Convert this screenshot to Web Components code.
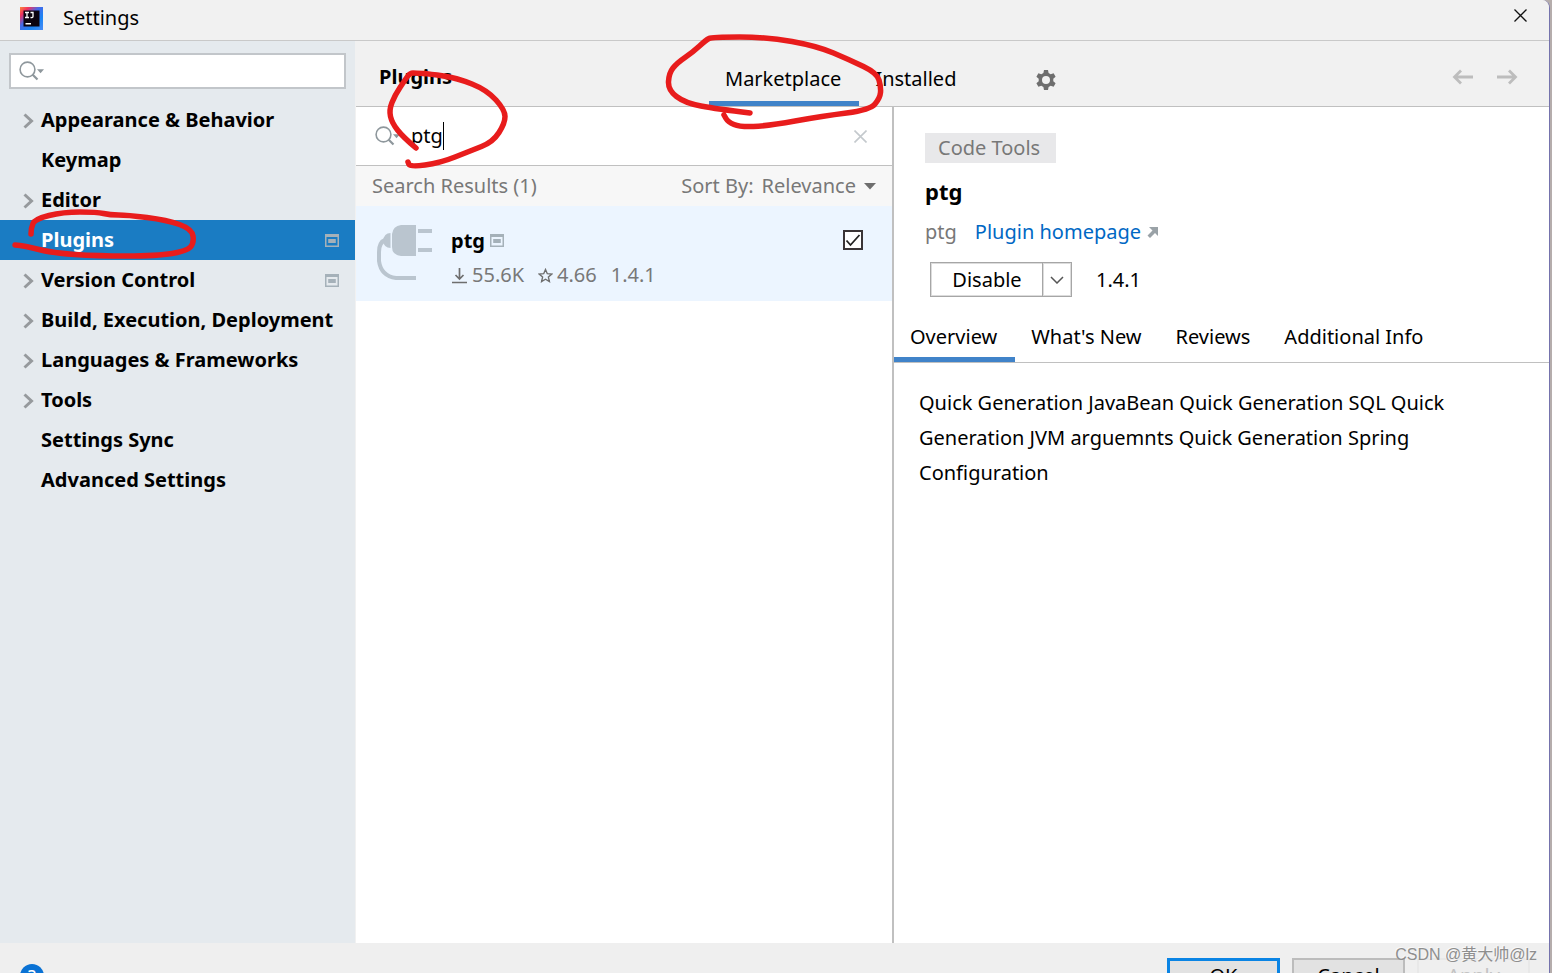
<!DOCTYPE html>
<html lang="en">
<head>
<meta charset="utf-8">
<title>Settings</title>
<style>
  body { margin: 0; font: 20px/28px "Noto Sans", "Open Sans", sans-serif; color: #000; background: #b5adac; }
</style>
</head>
<body>
<settings-window>
  <title-bar slot="title">Settings</title-bar>
  <settings-nav slot="nav">
    <nav-item expandable>Appearance &amp; Behavior</nav-item>
    <nav-item>Keymap</nav-item>
    <nav-item expandable>Editor</nav-item>
    <nav-item selected project>Plugins</nav-item>
    <nav-item expandable project>Version Control</nav-item>
    <nav-item expandable>Build, Execution, Deployment</nav-item>
    <nav-item expandable>Languages &amp; Frameworks</nav-item>
    <nav-item expandable>Tools</nav-item>
    <nav-item>Settings Sync</nav-item>
    <nav-item>Advanced Settings</nav-item>
  </settings-nav>
  <plugins-header slot="header">
    <span slot="heading">Plugins</span>
    <tab-item selected>Marketplace</tab-item>
    <tab-item>Installed</tab-item>
  </plugins-header>
  <plugin-list slot="list">
    <plugin-row>ptg</plugin-row>
  </plugin-list>
  <plugin-details slot="details">
    <span slot="tag">Code Tools</span>
    <span slot="name">ptg</span>
    <span slot="vendor">ptg</span>
    <tab-item slot="tabs" selected>Overview</tab-item>
    <tab-item slot="tabs">What's New</tab-item>
    <tab-item slot="tabs">Reviews</tab-item>
    <tab-item slot="tabs">Additional Info</tab-item>
    Quick Generation JavaBean Quick Generation SQL Quick Generation JVM arguemnts Quick Generation Spring Configuration
  </plugin-details>
  <dialog-footer slot="footer"></dialog-footer>
</settings-window>
<red-marks></red-marks>
<water-mark>CSDN @黄大帅@lz</water-mark>

<script>
const BASE = `:host,*{box-sizing:border-box} button,input,select{font:inherit;color:inherit;margin:0;padding:0;border:0;background:none;outline:0;border-radius:0} svg{display:block;flex:none}`;
const SEARCH = `<svg width="26" height="20" viewBox="0 0 26 20" fill="none" stroke="#8e979c"><circle cx="8.5" cy="8.5" r="7.4" stroke-width="1.6"/><path d="M13.5 13.5l5 5" stroke-width="2.2"/><path d="M18 8.2h7l-3.5 4z" fill="#8e979c" stroke="none"/></svg>`;
const PROJECT = `<svg width="14" height="13" viewBox="0 0 14 13" fill="#a5b1b9"><path fill-rule="evenodd" d="M0 0h14v13H0zM1.500 3v8.500h11V3z"/><path d="M3.200 5h7.600v4H3.200z"/></svg>`;

function define(name, css, html) {
  const tpl = document.createElement('template');
  tpl.innerHTML = `<style>${BASE}${css}</style>${html}`;
  customElements.define(name, class extends HTMLElement {
    constructor() {
      super();
      this.attachShadow({ mode: 'open' }).append(tpl.content.cloneNode(true));
    }
  });
}

define('settings-window', `
  :host{display:grid;grid-template-rows:auto 1fr 30px;height:100vh;margin-right:2px;border-right:1px solid #7573ad;border-top-right-radius:8px;background:#f1f1f1;overflow:hidden}
  .main{display:grid;grid-template-columns:355px minmax(0,1fr);min-height:0}
  .page{display:grid;grid-template-rows:auto 1fr;border-left:1px solid #f1f1f1}
  .split{display:grid;grid-template-columns:538fr 655fr;background:#fff}
  ::slotted([slot=list]){border-right:2px solid #c0c0c0}`,
  `<slot name="title"></slot>
   <div class="main"><slot name="nav"></slot>
     <div class="page"><slot name="header"></slot><div class="split"><slot name="list"></slot><slot name="details"></slot></div></div>
   </div><slot name="footer"></slot>`);

define('title-bar', `
  :host{display:flex;align-items:center;height:41px;padding:0 22px 4px 20px;border-bottom:1px solid #c9c9c9;background:#f1f1f1}
  .t{flex:1;margin-left:20px}
  button{display:flex;padding-bottom:6px}`,
  `<svg width="23" height="23" viewBox="0 0 23 23"><defs><linearGradient id="g" x1="0" y1="0" x2="1" y2="1"><stop offset="0" stop-color="#fc8a3a"/><stop offset=".2" stop-color="#f0315f"/><stop offset=".42" stop-color="#4768e8"/><stop offset=".7" stop-color="#1a84f4"/><stop offset="1" stop-color="#4a8cf5"/></linearGradient></defs><path fill="url(#g)" d="M0 0h23v23H0z"/><path d="M3.500 3.500h16v16h-16z" fill="#0b0310"/><path d="M5 5.500h4M7 5.500v5M5 10.500h4M10.500 5.500H13v4q0 1.300-2.500 1" fill="none" stroke="#fff" stroke-width="1.300"/><path d="M5.500 16h5.500v1.500H5.500z" fill="#fff"/></svg>
   <span class="t"><slot></slot></span>
   <button aria-label="Close"><svg width="13" height="13" viewBox="0 0 13 13" stroke="#111" stroke-width="1.300"><path d="M.5.500l12 12M12.500.500l-12 12"/></svg></button>`);

define('settings-nav', `
  :host{display:block;background:#e5eaee;padding-top:12px}
  label{display:flex;align-items:center;height:36px;margin:0 9px 11px;padding:0 8px;border:2px solid #c2c6ca;background:#fff}
  input{flex:1;min-width:0}`,
  `<label>${SEARCH}<input type="text" aria-label="Search settings"></label><nav><slot></slot></nav>`);

define('nav-item', `
  :host{display:flex;align-items:center;height:40px;padding:0 16px 0 23px;font-weight:700}
  .c{width:18px;flex:none;padding-top:2px;visibility:hidden}
  :host([expandable]) .c{visibility:visible}
  a{flex:1;color:inherit;text-decoration:none;white-space:nowrap}
  .p{display:none}
  :host([project]) .p{display:block}
  :host([selected]){background:#1a7cc3;color:#fff}`,
  `<span class="c"><svg width="11" height="16" viewBox="0 0 11 16" fill="none" stroke="#969a9d" stroke-width="3"><path d="M1.500 1.500L8.500 8l-7 6.500"/></svg></span><a href="#"><slot></slot></a><span class="p">${PROJECT}</span>`);

define('tab-item', `
  :host{display:flex;align-self:stretch}
  button{padding:4px 18px 0 16px;height:100%;border-top:5px solid transparent;border-bottom:5px solid transparent;white-space:nowrap}
  :host([selected]) button{border-bottom-color:#4083c9}`,
  `<button><slot></slot></button>`);

define('plugins-header', `
  :host{display:grid;grid-template-columns:353px auto 1fr;align-items:center;height:66px;padding-top:6px;border-bottom:1px solid #c0c0c0;background:#f1f1f1}
  b{padding:0 0 0 23px}
  .tabs{display:flex;height:100%;align-items:center}
  .tools{display:flex;justify-content:space-between;align-items:center;padding:6px 31px 0 62px}
  button{display:flex}
  .nav{display:flex;gap:22px;padding-bottom:6px}`,
  `<b><slot name="heading"></slot></b><div class="tabs"><slot></slot></div>
   <div class="tools"><button aria-label="Plugin settings"><svg width="20" height="20" viewBox="-10 -10 20 20" fill="#6e6e6e"><path fill-rule="evenodd" d="M-2-10h4l.6 3 2.100 1.200 2.900-1 2 3.500-2.300 2v2.600l2.300 2-2 3.500-2.900-1L2.600 7 2 10h-4l-.6-3-2.100-1.200-2.900 1-2-3.500 2.300-2v-2.600l-2.300-2 2-3.500 2.900 1L-2.600-7zM0-4a4 4 0 1 0 0 8 4 4 0 1 0 0-8z"/></svg></button>
   <span class="nav"><button aria-label="Back"><svg width="22" height="16" viewBox="0 0 22 16" fill="none" stroke="#bdbdbd" stroke-width="2.800"><path d="M21 8H3M9 1.500L2.500 8 9 14.500"/></svg></button><button aria-label="Forward"><svg width="22" height="16" viewBox="0 0 22 16" fill="none" stroke="#bdbdbd" stroke-width="2.800"><path d="M1 8h18M13 1.500L19.500 8 13 14.500"/></svg></button></span></div>`);

define('plugin-list', `
  :host{display:block}
  .search{display:flex;align-items:center;height:59px;padding:0 25px 0 19px;border-bottom:1px solid #c0c0c0}
  .search label{display:flex;align-items:center;flex:1}
  input{field-sizing:content;margin-left:10px;height:28px}
  i{width:1px;height:28px;background:#000}
  button{display:flex}
  .bar{display:flex;justify-content:space-between;align-items:center;height:40px;padding:0 16px;background:#f7f7f7;color:#787878}
  .sort{display:flex;align-items:center;gap:8px}
  select{appearance:none;field-sizing:content;height:28px}`,
  `<div class="search"><label>${SEARCH}<input type="text" value="ptg" aria-label="Search plugins"><i></i></label><button aria-label="Clear"><svg width="13" height="13" viewBox="0 0 13 13" stroke="#c4c9cd" stroke-width="1.600"><path d="M.5.500l12 12M12.500.500l-12 12"/></svg></button></div>
   <div class="bar"><span>Search Results (1)</span><span class="sort"><label for="s">Sort By:</label><select id="s"><option>Relevance</option></select><svg width="12" height="7" viewBox="0 0 12 7" fill="#6e6e6e"><path d="M0 0h12L6 6.500z"/></svg></span></div>
   <slot></slot>`);

define('plugin-row', `
  :host{display:flex;height:95px;padding:18px 29px 0 21px;background:#ecf5ff}
  .info{flex:1;margin-left:19px}
  .name{display:flex;align-items:center;gap:5px;font-weight:700;height:33px}
  .meta{display:flex;align-items:center;color:#787878;height:36px}
  .meta svg{margin-right:4px}
  .meta span{margin-right:14px}
  input{appearance:none;width:20px;height:20px;margin-top:6px;border:2px solid #3a3436;background:#fff url("data:image/svg+xml,%3Csvg xmlns='http://www.w3.org/2000/svg' viewBox='0 0 16 16'%3E%3Cpath d='M1.500 8.500l4 4.500L14.500 3' fill='none' stroke='%23222' stroke-width='1.800'/%3E%3C/svg%3E") center/16px no-repeat}`,
  `<svg width="55" height="56" viewBox="0 0 55 56" fill="#bac5cf"><path d="M24 1h15v31H24q-9-1-9-9V10q1-8 9-9zM41 5h14v4H41zM41 24h14v4H41zM13.500 9v15Q7 24 6 17q1-8 7.500-8z"/><path d="M9 15.500Q2 18 2 28v9q2 15 17 17h20" fill="none" stroke="#bac5cf" stroke-width="4"/></svg>
   <div class="info"><div class="name"><slot></slot>${PROJECT}</div>
   <div class="meta"><svg width="17" height="17" viewBox="0 0 17 17" fill="none" stroke="#6e6e6e" stroke-width="1.700"><path d="M1 15.500h15M8.500 1v11M4.500 8l4 4 4-4"/></svg><span>55.6K</span><svg width="15" height="15" viewBox="0 0 15 15" fill="none" stroke="#6e6e6e" stroke-width="1.400"><path d="M7.500 1.500l1.800 4.200 4.500.4-3.400 3 1 4.400-3.900-2.300-3.900 2.300 1-4.400-3.400-3 4.500-.4z"/></svg><span>4.66</span><span>1.4.1</span></div></div>
   <input type="checkbox" checked aria-label="Enable ptg">`);

define('plugin-details', `
  :host{display:block;padding-top:26px}
  .tag{display:inline-flex;align-items:center;height:30px;margin-left:31px;padding:0 16px 0 13px;background:#e8e8ea;color:#787878}
  h1{margin:8px 0 0 31px;font:inherit;font-weight:700;font-size:22px;line-height:40px}
  .by{display:flex;align-items:center;gap:18px;height:42px;margin-left:31px;color:#787878}
  a{display:flex;align-items:center;gap:6px;color:#0068c4;text-decoration:none}
  .act{display:flex;align-items:center;height:35px;margin:9px 0 0 36px}
  .act button{height:35px;border:1px solid #a6a6a6;box-shadow:inset 0 0 0 1px #dcdcdc;display:flex;align-items:center;justify-content:center}
  .d{width:114px}
  .act .m{width:30px;margin-left:-2px}
  .act span{margin-left:24px}
  .tabs{display:flex;height:66px;border-bottom:1px solid #c0c0c0;padding-top:10px}
  p{margin:22px 90px 0 25px;line-height:35px}`,
  `<div class="tag"><slot name="tag"></slot></div><h1><slot name="name"></slot></h1>
   <div class="by"><slot name="vendor"></slot><a href="#">Plugin homepage<svg width="11" height="11" viewBox="0 0 11 11"><path d="M2 0h9v9L8 6l-5 5-2.500-2.500 5-5z" fill="#9aa2a7"/></svg></a></div>
   <div class="act"><button class="d">Disable</button><button class="m" aria-label="More actions"><svg width="14" height="8" viewBox="0 0 14 8" fill="none" stroke="#555" stroke-width="1.500"><path d="M1 1l6 6 6-6"/></svg></button><span>1.4.1</span></div>
   <div class="tabs"><slot name="tabs"></slot></div><p><slot></slot></p>`);

define('dialog-footer', `
  :host{display:flex;align-items:flex-start;gap:12px;padding:15px 19px 0 20px;background:#efefef;overflow:hidden}
  button{width:113px;height:36px;border:2px solid #bcbcbc;background:#e2e2e2;line-height:24px}
  .h{width:24px;height:24px;margin:6px auto 0 0;border:0;border-radius:50%;background:#0a72d4;color:#fff;font-size:18px;line-height:24px}
  .ok{border:3px solid #0a84e4}
  button:disabled{border-color:#e8e8e8;background:#efefef;color:#c3c3c3}`,
  `<button class="h" aria-label="Help">?</button><button class="ok">OK</button><button>Cancel</button><button disabled>Apply</button>`);

define('water-mark', `:host{position:absolute;right:15px;bottom:4px;font:16px/28px "Liberation Sans","Noto Sans CJK SC",sans-serif;color:#8e8e8e;text-shadow:-1px -1px 0 #f8f8f8;pointer-events:none}`, `<slot></slot>`);

// Freehand strokes: each list of points is joined by curves through the midpoints.
const STROKES = [
  [31,234,31,228,35,219,63,212,97,212,110,215,127,215,167,220,192,229,194,243,187,251,157,256,97,256,53,253,25,246,15,245],
  [416,148,403,137,392,123,389,110,395,95,405,80,410,73,416,73,430,74,457,78,487,90,505,110,505,123,493,142,470,151,440,163,410,167,408,162],
  [750,113,717,109,685,103,668,90,669,73,677,63,693,52,706,40,712,37,767,37,817,46,850,60,877,73,881,87,880,98,870,110,823,116,767,126,740,127,728,122,724,115]
];
define('red-marks', `:host{display:block;position:absolute;left:0;top:0;pointer-events:none} path{fill:none;stroke:#e81c1c;stroke-width:5.5;stroke-linecap:round;stroke-linejoin:round}`,
  `<svg width="900" height="270">${STROKES.map(s => {
    const n = s.length;
    let d = `M${s[0]} ${s[1]}`;
    for (let i = 2; i < n - 2; i += 2) d += `Q${s[i]} ${s[i + 1]} ${(s[i] + s[i + 2]) / 2} ${(s[i + 1] + s[i + 3]) / 2}`;
    return `<path d="${d}L${s[n - 2]} ${s[n - 1]}"/>`;
  }).join('')}</svg>`);
</script>
</body>
</html>
